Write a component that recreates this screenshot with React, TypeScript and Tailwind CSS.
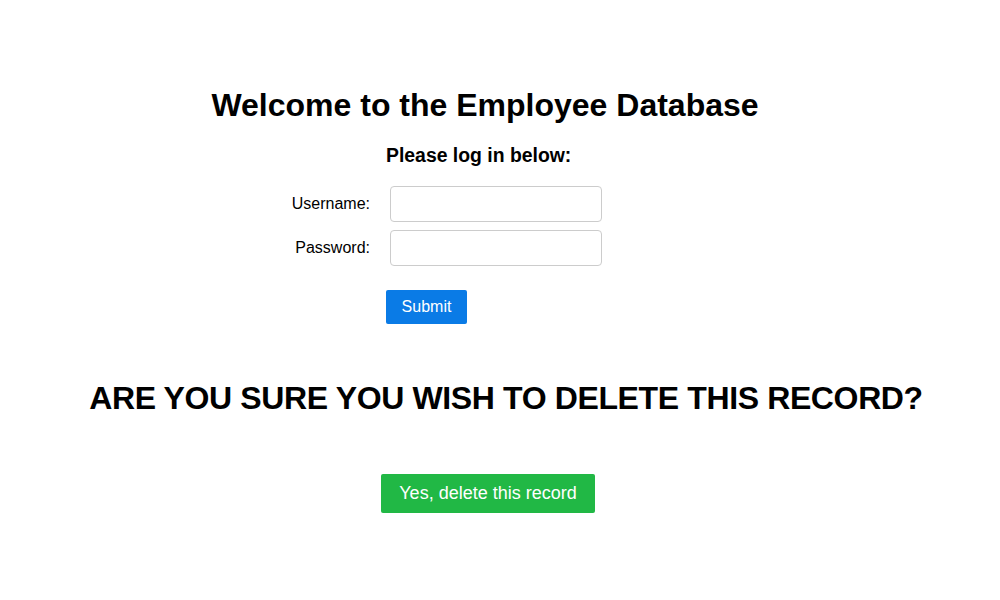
import React from "react";

export default function App() {
  return (
    <div className="w-[1000px] h-[600px] bg-white text-black font-['Liberation_Sans',Arial,sans-serif] flex flex-col">
      <div className="pt-[86px] w-[970px] text-center">
        <h1 className="text-[32px] font-bold leading-[38px]">Welcome to the Employee Database</h1>
      </div>
      <div className="mt-[20px] pl-[386px]">
        <h2 className="text-[19.4px] font-bold leading-[22px]">Please log in below:</h2>
      </div>
      <div className="mt-[20px] flex flex-col gap-[8px]">
        <div className="flex items-center">
          <label className="w-[371px] text-right pr-[1px] text-[16px]">Username:</label>
          <input className="ml-[19px] w-[212px] h-[36px] border border-[#cccccc] rounded-[4px]" />
        </div>
        <div className="flex items-center">
          <label className="w-[371px] text-right pr-[1px] text-[16px]">Password:</label>
          <input type="password" className="ml-[19px] w-[212px] h-[36px] border border-[#cccccc] rounded-[4px]" />
        </div>
      </div>
      <div className="mt-[24px] pl-[386px]">
        <button className="w-[81px] h-[34px] bg-[#0a7be6] text-white text-[16px] rounded-[2px]">Submit</button>
      </div>
      <div className="mt-[55px] w-[1012px] text-center">
        <h2 className="text-[32px] font-bold leading-[38px] tracking-[-0.37px]">ARE YOU SURE YOU WISH TO DELETE THIS RECORD?</h2>
      </div>
      <div className="mt-[57px] pl-[381px]">
        <button className="w-[214px] h-[39px] bg-[#21b845] text-white text-[18px] rounded-[2px]">Yes, delete this record</button>
      </div>
    </div>
  );
}
